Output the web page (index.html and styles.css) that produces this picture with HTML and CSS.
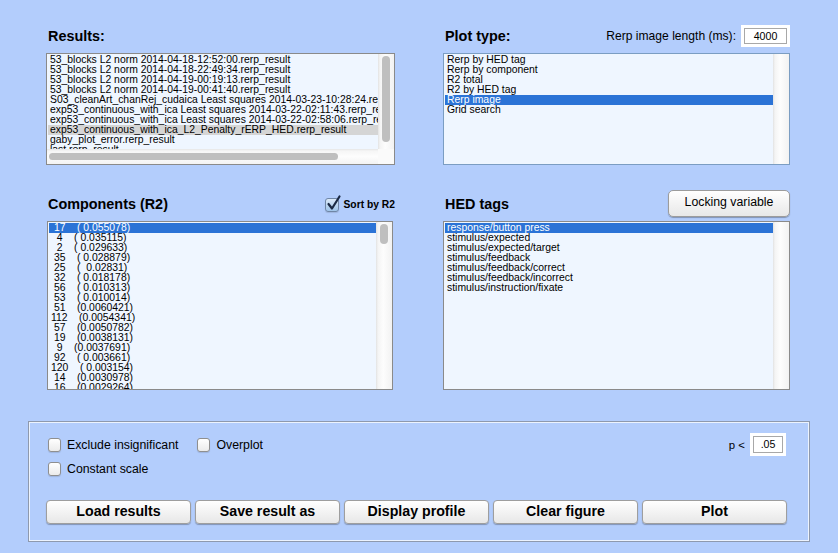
FILE: index.html
```html
<!DOCTYPE html>
<html>
<head>
<meta charset="utf-8">
<title>rERP results</title>
<link rel="stylesheet" href="styles.css">
</head>
<body>
<div class="grid">
  <section class="sec">
    <div class="hdr"><h2 class="title">Results:</h2></div>
    <div class="list list-results">
      <div class="items">
        <div class="item">53_blocks L2 norm 2014-04-18-12:52:00.rerp_result</div>
        <div class="item">53_blocks L2 norm 2014-04-18-22:49:34.rerp_result</div>
        <div class="item">53_blocks L2 norm 2014-04-19-00:19:13.rerp_result</div>
        <div class="item">53_blocks L2 norm 2014-04-19-00:41:40.rerp_result</div>
        <div class="item">S03_cleanArt_chanRej_cudaica Least squares 2014-03-23-10:28:24.rerp_result</div>
        <div class="item">exp53_continuous_with_ica Least squares 2014-03-22-02:11:43.rerp_result</div>
        <div class="item">exp53_continuous_with_ica Least squares 2014-03-22-02:58:06.rerp_result</div>
        <div class="item gray">exp53_continuous_with_ica_L2_Penalty_rERP_HED.rerp_result</div>
        <div class="item">gaby_plot_error.rerp_result</div>
        <div class="item">last.rerp_result</div>
      </div>
      <div class="vtrack"><div class="vthumb vthumb-results"></div></div>
      <div class="htrack"><div class="hthumb"></div></div>
      <div class="corner"></div>
    </div>
  </section>

  <section class="sec">
    <div class="hdr">
      <h2 class="title">Plot type:</h2>
      <div class="field">
        <span class="field-label">Rerp image length (ms):</span>
        <div class="numbox numbox-wide"><div class="numbox-in">4000</div></div>
      </div>
    </div>
    <div class="list list-plot">
      <div class="items">
        <div class="item">Rerp by HED tag</div>
        <div class="item">Rerp by component</div>
        <div class="item">R2 total</div>
        <div class="item">R2 by HED tag</div>
        <div class="item sel">Rerp image</div>
        <div class="item">Grid search</div>
      </div>
      <div class="vtrack"></div>
    </div>
  </section>

  <section class="sec">
    <div class="hdr tall">
      <h2 class="title">Components (R2)</h2>
      <label class="sort">
        <span class="cb checked"><svg class="check" width="18" height="18" viewBox="0 0 18 18"><path d="M3.5 9 L7 13.5 L14.5 1.5" fill="none" stroke="#1c2a44" stroke-width="2.2" stroke-linecap="round" stroke-linejoin="round"/></svg></span>
        <span class="sort-text">Sort by R2</span>
      </label>
    </div>
    <div class="list list-comp">
      <div class="items pre">
        <div class="item sel"> 17    ( 0.055078)</div>
        <div class="item">  4    ( 0.035115)</div>
        <div class="item">  2    ( 0.029633)</div>
        <div class="item"> 35    ( 0.028879)</div>
        <div class="item"> 25    (  0.02831)</div>
        <div class="item"> 32    ( 0.018178)</div>
        <div class="item"> 56    ( 0.010313)</div>
        <div class="item"> 53    ( 0.010014)</div>
        <div class="item"> 51    (0.0060421)</div>
        <div class="item">112    (0.0054341)</div>
        <div class="item"> 57    (0.0050782)</div>
        <div class="item"> 19    (0.0038131)</div>
        <div class="item">  9    (0.0037691)</div>
        <div class="item"> 92    ( 0.003661)</div>
        <div class="item">120    ( 0.003154)</div>
        <div class="item"> 14    (0.0030978)</div>
        <div class="item"> 16    (0.0029264)</div>
      </div>
      <div class="vtrack"><div class="vthumb vthumb-comp"></div></div>
    </div>
  </section>

  <section class="sec">
    <div class="hdr tall">
      <h2 class="title">HED tags</h2>
      <button class="lockbtn">Locking variable</button>
    </div>
    <div class="list list-hed">
      <div class="items">
        <div class="item sel">response/button press</div>
        <div class="item">stimulus/expected</div>
        <div class="item">stimulus/expected/target</div>
        <div class="item">stimulus/feedback</div>
        <div class="item">stimulus/feedback/correct</div>
        <div class="item">stimulus/feedback/incorrect</div>
        <div class="item">stimulus/instruction/fixate</div>
      </div>
      <div class="vtrack"></div>
    </div>
  </section>
</div>

<div class="panel">
  <div class="prow">
    <label class="opt opt-first"><span class="cb"></span>Exclude insignificant</label>
    <label class="opt opt-over"><span class="cb"></span>Overplot</label>
    <div class="pfield">
      <span class="p-label">p &lt;</span>
      <div class="numbox numbox-p"><div class="numbox-in">.05</div></div>
    </div>
  </div>
  <div class="prow2">
    <label class="opt opt-first"><span class="cb"></span>Constant scale</label>
  </div>
  <div class="btnrow">
    <button class="btn">Load results</button>
    <button class="btn">Save result as</button>
    <button class="btn">Display profile</button>
    <button class="btn">Clear figure</button>
    <button class="btn">Plot</button>
  </div>
</div>
</body>
</html>
```

FILE: styles.css
```css
* { box-sizing: border-box; }
html, body { margin: 0; padding: 0; }
body {
  width: 838px;
  height: 553px;
  overflow: hidden;
  background: #b3cdfc;
  color: #000;
  font-family: "Liberation Sans", Arial, Helvetica, sans-serif;
}

.grid {
  display: grid;
  grid-template-columns: 349px 347px;
  column-gap: 48px;
  row-gap: 25px;
  padding: 24px 0 0 46px;
}

.sec { display: flex; flex-direction: column; }

.hdr {
  display: flex;
  align-items: center;
  justify-content: space-between;
  height: 24px;
  margin-bottom: 5px;
}
.hdr.tall { height: 27px; margin-bottom: 4px; }

.title {
  margin: 0 0 0 2px;
  font-size: 14.4px;
  font-weight: bold;
  line-height: 16px;
}

.field { display: flex; align-items: center; }
.field-label { font-size: 12.1px; margin-right: 5px; }

.numbox {
  background: #fff;
  padding: 3px;
}
.numbox-in {
  border: 1px solid #a8a8a8;
  background: #fff;
  height: 16px;
  line-height: 14px;
  font-size: 10.6px;
  text-align: center;
}
.numbox-wide { width: 49px; height: 22px; }
.numbox-p { width: 36px; height: 23px; }
.numbox-p .numbox-in { height: 17px; line-height: 15px; }

/* list boxes */
.list {
  border: 1px solid #8a8a8a;
  background: #eff6ff;
  display: grid;
  grid-template-columns: 1fr 16px;
  overflow: hidden;
}
.list-results { height: 112px; grid-template-rows: 1fr 15px; }
.list-plot { height: 112px; border-color: #7b9dc2; }
.list-comp { height: 169px; margin: 0 2px 0 1px; }
.list-hed { height: 169px; }

.items {
  overflow: hidden;
  padding: 1px 0 0 1px;
  font-size: 10.4px;
  line-height: 10px;
  white-space: nowrap;
}
.item { height: 10px; padding-left: 2px; }
.items.pre .item { white-space: pre; }
.item.sel { background: #2b73d6; color: #fff; }
.item.gray { background: #d5d5d5; }

.vtrack {
  background: linear-gradient(to right, #e2e2e2 0, #f4f4f4 2px, #fdfdfd 45%, #f2f2f2 100%);
  padding-top: 2px;
}
.vthumb {
  width: 8px;
  margin: 0 auto;
  border-radius: 4px;
  background: #bfbfbf;
}
.vthumb-results { height: 86px; }
.vthumb-comp { height: 20px; }

.htrack {
  background: linear-gradient(to bottom, #e6e6e6 0, #f6f6f6 2px, #fdfdfd 50%, #f3f3f3 100%);
  padding: 4px 0 0 2px;
}
.hthumb {
  width: 289px;
  height: 7px;
  border-radius: 4px;
  background: #bfbfbf;
}
.corner { background: #fafafa; }

/* checkboxes */
.cb {
  display: inline-block;
  flex: none;
  width: 13px;
  height: 14px;
  border: 1px solid #8f8f8f;
  border-radius: 3px;
  background: linear-gradient(#ffffff, #ebebeb);
  box-shadow: 0 1px 1px rgba(0, 0, 0, 0.12);
  position: relative;
}
.cb.checked {
  width: 14px;
  background: linear-gradient(#dbe9f8, #9fc4ea);
  border-color: #6f86a6;
}
.check { position: absolute; left: -1px; top: -4px; overflow: visible; }

.sort { display: flex; align-items: center; margin-top: 2px; }
.sort-text { font-size: 10.3px; font-weight: bold; margin-left: 5px; }

.lockbtn {
  width: 122px;
  height: 27px;
  margin: 0;
  padding: 0 0 3px;
  border: 1px solid #9c9c9c;
  border-radius: 5px;
  background: linear-gradient(#ffffff, #f3f3f3 50%, #e8e8e8);
  box-shadow: 0 1px 1px rgba(0, 0, 0, 0.28);
  font-family: inherit;
  font-size: 12.3px;
  color: #000;
}

/* bottom panel */
.panel {
  margin: 31px 0 0 28px;
  width: 782px;
  height: 121px;
  border: 1px solid #8e99ad;
  box-shadow: inset 0 0 0 1px rgba(255, 255, 255, 0.75);
  padding: 11px 22px 0 17px;
}
.prow { display: flex; align-items: center; height: 23px; }
.prow2 { display: flex; align-items: center; height: 14px; margin-top: 6px; }
.opt { display: flex; align-items: center; font-size: 12.3px; }
.opt .cb { margin-right: 6px; }
.opt-first { margin-left: 2px; }
.opt-over { margin-left: 19px; }
.pfield { margin-left: auto; display: flex; align-items: center; margin-right: 1px; }
.p-label { font-size: 11.4px; margin-right: 5px; }

.btnrow { display: flex; gap: 4px; margin-top: 24px; }
.btn {
  flex: 1;
  min-width: 0;
  height: 24px;
  margin: 0;
  padding: 0 0 3px;
  border: 1px solid #9e9e9e;
  border-radius: 4px;
  background: linear-gradient(#ffffff, #f3f3f3 50%, #e7e7e7);
  box-shadow: 0 1px 1px rgba(0, 0, 0, 0.28);
  font-family: inherit;
  font-size: 14.2px;
  font-weight: bold;
  color: #000;
  white-space: nowrap;
}
```
